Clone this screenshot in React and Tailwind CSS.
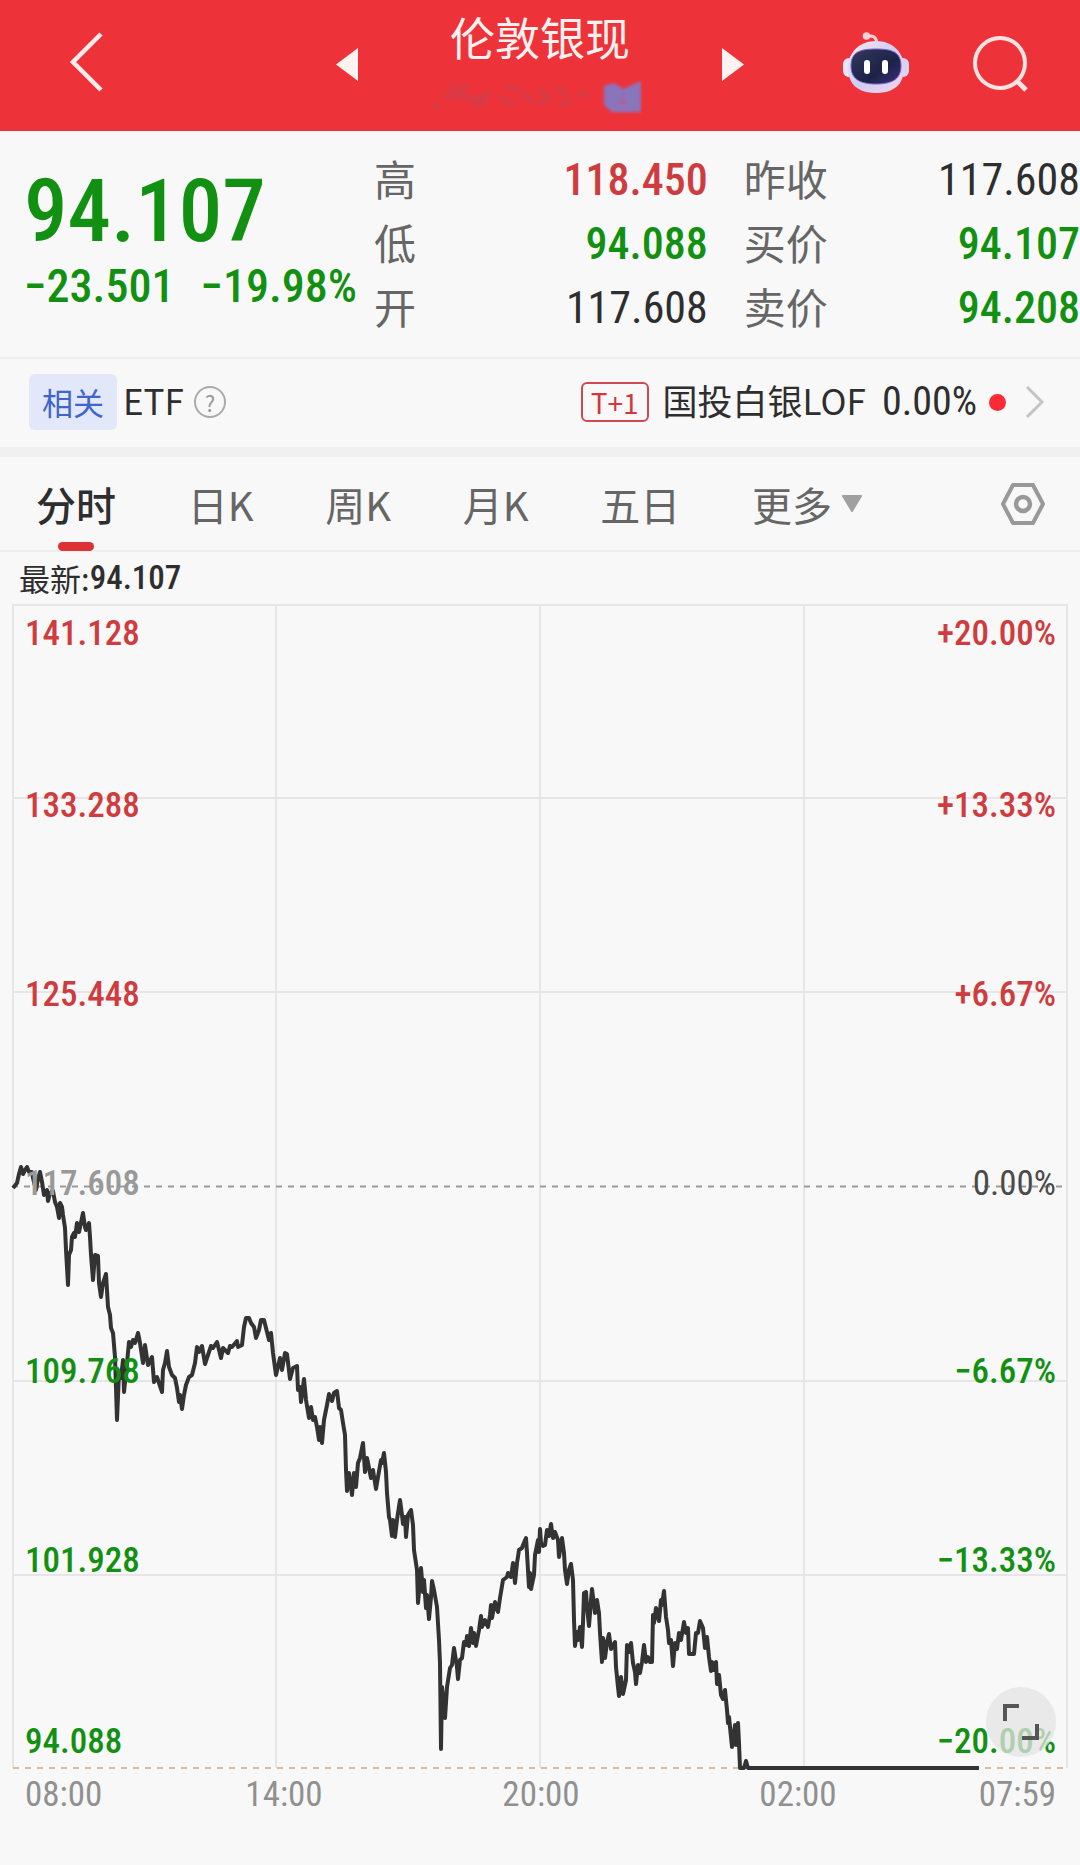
import React, { useState } from "react";

const QUOTE_ROWS = [
  { label: "高", value: "118.450", color: "font-medium text-[#cf3c40]", label2: "昨收", value2: "117.608", color2: "text-[#2e2e2e]" },
  { label: "低", value: "94.088", color: "font-medium text-[#129012]", label2: "买价", value2: "94.107", color2: "font-medium text-[#129012]" },
  { label: "开", value: "117.608", color: "text-[#2e2e2e]", label2: "卖价", value2: "94.208", color2: "font-medium text-[#129012]" },
];

const TABS = ["分时", "日K", "周K", "月K", "五日"];

// y is the text baseline inside the chart
const SCALE = [
  { price: "141.128", pct: "+20.00%", y: 41, fill: "#cf3c40" },
  { price: "133.288", pct: "+13.33%", y: 213, fill: "#cf3c40" },
  { price: "125.448", pct: "+6.67%", y: 402, fill: "#cf3c40" },
  { price: "117.608", pct: "0.00%", y: 591, fill: "#999999", pctFill: "#4a4a4a" },
  { price: "109.768", pct: "−6.67%", y: 779, fill: "#129012" },
  { price: "101.928", pct: "−13.33%", y: 968, fill: "#129012" },
  { price: "94.088", pct: "−20.00%", y: 1149, fill: "#129012" },
];

const TIMES = [
  { label: "08:00", x: 25, anchor: "start" },
  { label: "14:00", x: 284, anchor: "middle" },
  { label: "20:00", x: 541, anchor: "middle" },
  { label: "02:00", x: 798, anchor: "middle" },
  { label: "07:59", x: 1056, anchor: "end" },
];

const PRICE_LINE =
  "13,1188 17,1183 19,1174 21,1167 23,1174 25,1170 27,1167 29,1172 32,1172 33,1178 36,1190 38,1179 40,1172 42,1182 44,1195 47,1190 48,1201 50,1193 53,1191 55,1202 57,1207 59,1218 60,1203 62,1207 63,1215 65,1228 66,1250 68,1285 69,1255 71,1250 72,1237 74,1233 75,1237 77,1223 79,1232 83,1213 85,1227 86,1230 89,1223 90,1237 91,1255 93,1280 95,1255 98,1256 99,1283 101,1297 103,1283 106,1274 108,1307 110,1315 111,1328 113,1333 115,1357 117,1420 119,1373 121,1378 123,1360 124,1392 127,1363 129,1342 131,1347 133,1340 135,1343 138,1333 140,1343 143,1363 145,1345 148,1365 152,1357 154,1382 157,1377 159,1383 162,1392 163,1370 165,1363 167,1351 169,1367 172,1375 175,1378 177,1388 179,1402 180,1395 182,1409 184,1395 186,1385 189,1377 192,1375 195,1363 197,1347 199,1352 202,1346 205,1364 207,1358 211,1346 213,1348 217,1342 221,1358 223,1348 228,1353 230,1346 232,1347 237,1341 238,1347 242,1345 244,1327 246,1318 249,1318 251,1323 254,1327 256,1338 259,1330 261,1320 264,1320 267,1332 269,1340 271,1333 273,1353 276,1375 " +
  "280,1358 282,1370 285,1353 287,1354 290,1379 293,1368 297,1366 298,1390 300,1387 301,1402 304,1379 306,1400 309,1418 311,1407 313,1420 315,1417 317,1427 319,1440 320,1427 322,1443 324,1420 327,1405 329,1394 332,1401 334,1393 337,1391 339,1408 341,1410 343,1423 345,1435 346,1470 347,1491 349,1473 352,1495 354,1473 356,1487 358,1463 360,1458 363,1443 365,1472 367,1458 369,1468 371,1478 373,1470 376,1489 378,1477 381,1460 382,1463 384,1453 386,1472 387,1493 389,1517 390,1520 392,1536 393,1520 395,1537 397,1520 398,1513 400,1500 402,1515 403,1524 405,1517 406,1537 408,1515 411,1510 413,1525 414,1550 417,1570 418,1603 421,1568 423,1592 424,1580 426,1608 427,1595 429,1619 431,1597 432,1581 434,1590 437,1607 439,1640 440,1663 441,1749 442,1687 445,1718 447,1687 450,1668 452,1665 454,1648 457,1667 458,1679 460,1660 462,1658 464,1642 466,1645 467,1636 469,1646 471,1628 473,1643 474,1633 476,1646 479,1630 481,1616 482,1627 485,1620 488,1627 490,1615 491,1605 492,1618 495,1602 498,1612 500,1598 503,1580 507,1577 508,1573 511,1577 513,1563 515,1583 517,1563 519,1550 " +
  "522,1548 523,1545 526,1538 527,1553 529,1587 530,1573 531,1589 534,1575 535,1555 538,1540 539,1552 540,1529 541,1543 543,1546 545,1545 547,1530 549,1536 551,1524 553,1538 555,1532 558,1540 559,1557 562,1538 564,1553 565,1570 567,1584 569,1570 571,1564 573,1580 574,1620 575,1646 577,1632 578,1640 580,1627 582,1647 583,1623 584,1593 586,1592 587,1607 589,1626 591,1600 592,1589 595,1613 597,1600 599,1613 600,1633 602,1662 603,1638 605,1658 607,1642 609,1634 611,1649 615,1642 616,1667 618,1687 619,1696 621,1677 623,1694 626,1680 627,1645 629,1652 631,1643 633,1663 635,1672 636,1684 638,1665 640,1673 642,1662 644,1645 646,1662 648,1657 650,1662 652,1662 653,1615 654,1623 656,1608 659,1621 661,1600 662,1605 664,1591 666,1617 668,1630 669,1643 671,1640 673,1666 675,1643 677,1649 679,1633 681,1640 684,1622 686,1633 688,1628 689,1654 694,1654 696,1633 698,1633 700,1621 703,1628 705,1648 707,1637 709,1657 711,1671 712,1662 714,1670 716,1662 717,1684 719,1675 721,1695 723,1699 725,1690 727,1710 728,1723 729,1717 731,1737 732,1747 735,1725 736,1745 738,1723 739,1743 740,1768 744,1768 746,1761 748,1768 979,1768";

function RobotIcon() {
  return (
    <svg width="68" height="62" viewBox="0 0 68 62" aria-hidden="true">
      <defs>
        <linearGradient id="shell" x1="0" y1="0" x2="1" y2="1">
          <stop offset="0" stopColor="#fbe9f2" />
          <stop offset="0.5" stopColor="#cfcdf3" />
          <stop offset="1" stopColor="#f3d3ea" />
        </linearGradient>
        <linearGradient id="visor" x1="0" y1="0" x2="1" y2="1">
          <stop offset="0" stopColor="#33395f" />
          <stop offset="0.6" stopColor="#1c2347" />
          <stop offset="1" stopColor="#3b2f7d" />
        </linearGradient>
      </defs>
      <path d="M25 4.500C31 3 34.500 5 35 12" fill="none" stroke="#fbd0d3" strokeWidth="3" />
      <circle cx="24.500" cy="4" r="3.800" fill="#fbd0d3" />
      <rect x="1" y="26" width="12" height="19" rx="6" fill="#e9e4fa" />
      <rect x="55" y="26" width="12" height="19" rx="6" fill="#d9d4f6" />
      <path d="M34 9C50 9 62 20 62 36C62 53 51 61 34 61C17 61 6 53 6 36C6 20 18 9 34 9Z" fill="url(#shell)" />
      <path d="M34 17C50 17 59 20 59 34C59 47 50 52 34 52C18 52 9 47 9 34C9 20 18 17 34 17Z" fill="url(#visor)" stroke="#7a63c9" strokeWidth="1" />
      <rect x="22" y="28" width="6" height="14" rx="3" fill="#fff" />
      <rect x="40" y="28" width="6" height="14" rx="3" fill="#fff" />
    </svg>
  );
}

function Header() {
  return (
    <header className="grid h-[131px] grid-cols-3 items-start bg-[#ed3339]">
      <div className="flex items-start justify-between pl-[64px]">
        <button aria-label="返回" className="mt-[29px]">
          <svg width="44" height="66" viewBox="0 0 44 66" fill="none" stroke="#ffeceb" strokeWidth="4.500">
            <path d="M37 5L9 33L37 61" />
          </svg>
        </button>
        <button aria-label="上一个" className="mt-[45px]">
          <svg width="30" height="40" viewBox="0 0 30 40" fill="#fff3f2">
            <path d="M28 3V36L6 19.500Z" />
          </svg>
        </button>
      </div>
      <div className="flex flex-col items-center pt-[9px]">
        <h1 className="text-[45px] leading-[56px] text-[#fff1ef]">伦敦银现</h1>
        <svg className="mt-[12px] mr-[8px]" width="212" height="40" viewBox="0 0 212 40" aria-hidden="true">
          <defs>
            <filter id="smudge"><feGaussianBlur stdDeviation="1.500" /></filter>
          </defs>
          <g filter="url(#smudge)">
            <path
              d="M3 31L9 27M18 10L28 14L38 8M14 21L30 17L44 23L60 16M42 28L58 24M76 10L90 12M70 20L84 28M92 16L104 26M108 12L118 20L110 28M126 10L138 18M130 27L142 24M148 14L158 20"
              fill="none" stroke="#b8465a" strokeWidth="6" opacity="0.4"
            />
            <path d="M174 9L184 6L193 12L211 4V35H182L174 28Z" fill="#8a74bd" />
            <path d="M186 27L194 20L198 28Z" fill="#c2567e" opacity="0.5" />
          </g>
        </svg>
      </div>
      <div className="flex items-start pr-[46px]">
        <button aria-label="下一个" className="mt-[45px]">
          <svg width="30" height="40" viewBox="0 0 30 40" fill="#fff3f2">
            <path d="M2 3V36L24 19.500Z" />
          </svg>
        </button>
        <button aria-label="智能助手" className="mt-[32px] ml-auto"><RobotIcon /></button>
        <button aria-label="搜索" className="mt-[34px] ml-[62px]">
          <svg width="62" height="62" viewBox="0 0 62 62" fill="none" stroke="#ffe3e2" strokeWidth="4">
            <circle cx="28" cy="29" r="25" />
            <path d="M45 47L54 56" strokeWidth="5" />
          </svg>
        </button>
      </div>
    </header>
  );
}

function Quote() {
  return (
    <section className="flex h-[228px] items-start border-b-2 border-[#eeeeee] pt-[17px]">
      <div className="w-[374px] shrink-0 pl-[24px] text-[#129012] font-medium font-['Roboto_Condensed','Roboto',sans-serif]">
        <p className="mt-[18px] text-[87px] leading-[90px]">94.107</p>
        <p className="flex gap-[26px] text-[46px] leading-[60px] whitespace-nowrap">
          <span>−23.501</span>
          <span>−19.98%</span>
        </p>
      </div>
      <dl className="grid flex-1 auto-rows-[64px] grid-cols-[auto_13fr_auto_10fr] text-[42px] text-[#666666]">
        {QUOTE_ROWS.map((r) => (
          <React.Fragment key={r.label}>
            <dt className="leading-[60px]">{r.label}</dt>
            <dd className={`pr-[36px] text-right text-[44px] leading-[64px] font-['Roboto_Condensed','Roboto',sans-serif] ${r.color}`}>{r.value}</dd>
            <dt className="leading-[60px]">{r.label2}</dt>
            <dd className={`text-right text-[44px] leading-[64px] font-['Roboto_Condensed','Roboto',sans-serif] ${r.color2}`}>{r.value2}</dd>
          </React.Fragment>
        ))}
      </dl>
    </section>
  );
}

function Related() {
  return (
    <section className="flex h-[98px] items-center justify-between border-b-[10px] border-[#f0f0f0] pr-[34px] pb-[2px] pl-[29px] text-[35px] text-[#2e2e2e]">
      <div className="flex items-center">
        <span className="rounded-md bg-[#e2e8f9] px-[13px] text-[31px] leading-[56px] text-[#3c66c8]">相关</span>
        <span className="ml-[6px] pb-1">ETF</span>
        <button aria-label="说明" className="ml-[10px] flex size-8 items-center justify-center rounded-full border-2 border-[#aaaaaa] text-[22px] leading-none text-[#999999]">?</button>
      </div>
      <a href="#lof" className="flex items-center">
        <span className="rounded-md border-2 border-[#cf4a50] px-[8px] text-[28px] leading-[36px] text-[#d5363c]">T+1</span>
        <span className="ml-[14px] pb-1">国投白银LOF</span>
        <span className="ml-[16px] text-[40px] font-['Roboto_Condensed','Roboto',sans-serif]">0.00%</span>
        <span className="ml-[12px] size-[17px] rounded-full bg-[#fb2a36]" />
        <svg className="ml-[18px]" width="22" height="34" viewBox="0 0 22 34" fill="none" stroke="#c4c4c4" strokeWidth="3">
          <path d="M3 2L18 17L3 32" />
        </svg>
      </a>
    </section>
  );
}

function Tabs() {
  const [active, setActive] = useState("分时");

  return (
    <nav className="flex h-[95px] items-center border-b-2 border-[#eeeeee] pr-[34px] pl-[36px] text-[40px] text-[#666666]">
      <div className="flex h-full flex-1 items-center justify-between">
        {TABS.map((t) => (
          <button
            key={t}
            onClick={() => setActive(t)}
            className={`relative h-full ${t === active ? "font-medium text-[#2e2e2e]" : ""}`}
          >
            {t}
            {t === active && <span className="absolute -bottom-px left-1/2 h-[9px] w-[36px] -translate-x-1/2 rounded-full bg-[#dc3236]" />}
          </button>
        ))}
        <button className="flex items-center gap-[9px]">
          更多
          <svg width="22" height="18" viewBox="0 0 22 18" fill="#a0a0a0" stroke="#a0a0a0" strokeWidth="2" strokeLinejoin="round">
            <path d="M2 1H20L11 16Z" />
          </svg>
        </button>
      </div>
      <button aria-label="设置" className="ml-[137px]">
        <svg width="46" height="44" viewBox="0 0 46 44" fill="none" stroke="#999999" strokeWidth="4" strokeLinejoin="round">
          <path d="M13 3H33L43 22L33 41H13L3 22Z" />
          <circle cx="23" cy="22" r="7" strokeWidth="4.500" />
        </svg>
      </button>
    </nav>
  );
}

function Chart() {
  return (
    <section className="relative">
      <svg className="block w-full text-[35px] font-['Roboto_Condensed','Roboto',sans-serif]" viewBox="0 0 1080 1261" role="img" aria-label="分时走势">
        <g fill="none" stroke="#e6e6e6" strokeWidth="2">
          <path d="M13 1164V1H1067V1164" />
          <path d="M276 1V1164M540 1V1164M804 1V1164" />
          <path d="M13 194H1067M13 388H1067M13 777H1067M13 971H1067" />
        </g>
        <path d="M13 582.500H1063" stroke="#9a9a9a" strokeWidth="2" strokeDasharray="6 6" strokeDashoffset="1" />
        <path d="M13 1164H1067" stroke="#d3bfa0" strokeWidth="2" strokeDasharray="6 6" />
        <polyline
          points={PRICE_LINE}
          transform="translate(0 -604)"
          fill="none" stroke="#333333" strokeWidth="4" strokeLinejoin="round"
        />
        {SCALE.map((s) => (
          <React.Fragment key={s.price}>
            <text className="font-medium" x="25" y={s.y} fill={s.fill}>{s.price}</text>
            <text className={s.pctFill ? "font-normal" : "font-medium"} x="1056" y={s.y} fill={s.pctFill || s.fill} textAnchor="end">{s.pct}</text>
          </React.Fragment>
        ))}
        {TIMES.map((t) => (
          <text key={t.label} x={t.x} y="1202" fill="#909090" textAnchor={t.anchor}>{t.label}</text>
        ))}
      </svg>
      <button aria-label="全屏" className="absolute right-[24px] bottom-[108px] size-[70px] rounded-full bg-[#e4e4e4]/75">
        <svg width="70" height="70" viewBox="0 0 70 70" fill="none" stroke="#555555" strokeWidth="4">
          <path d="M33 19H19V34M51 37V51H36" />
        </svg>
      </button>
    </section>
  );
}

export default function App() {
  return (
    <main className="min-h-screen bg-[#f8f8f8] font-['Noto_Sans_CJK_SC',sans-serif]">
      <Header />
      <Quote />
      <Related />
      <Tabs />
      <p className="flex h-[52px] items-center pl-[19px] text-[31px] text-[#2e2e2e]">
        最新:
        <span className="text-[33px] font-medium font-['Roboto_Condensed','Roboto',sans-serif]">94.107</span>
      </p>
      <Chart />
    </main>
  );
}
